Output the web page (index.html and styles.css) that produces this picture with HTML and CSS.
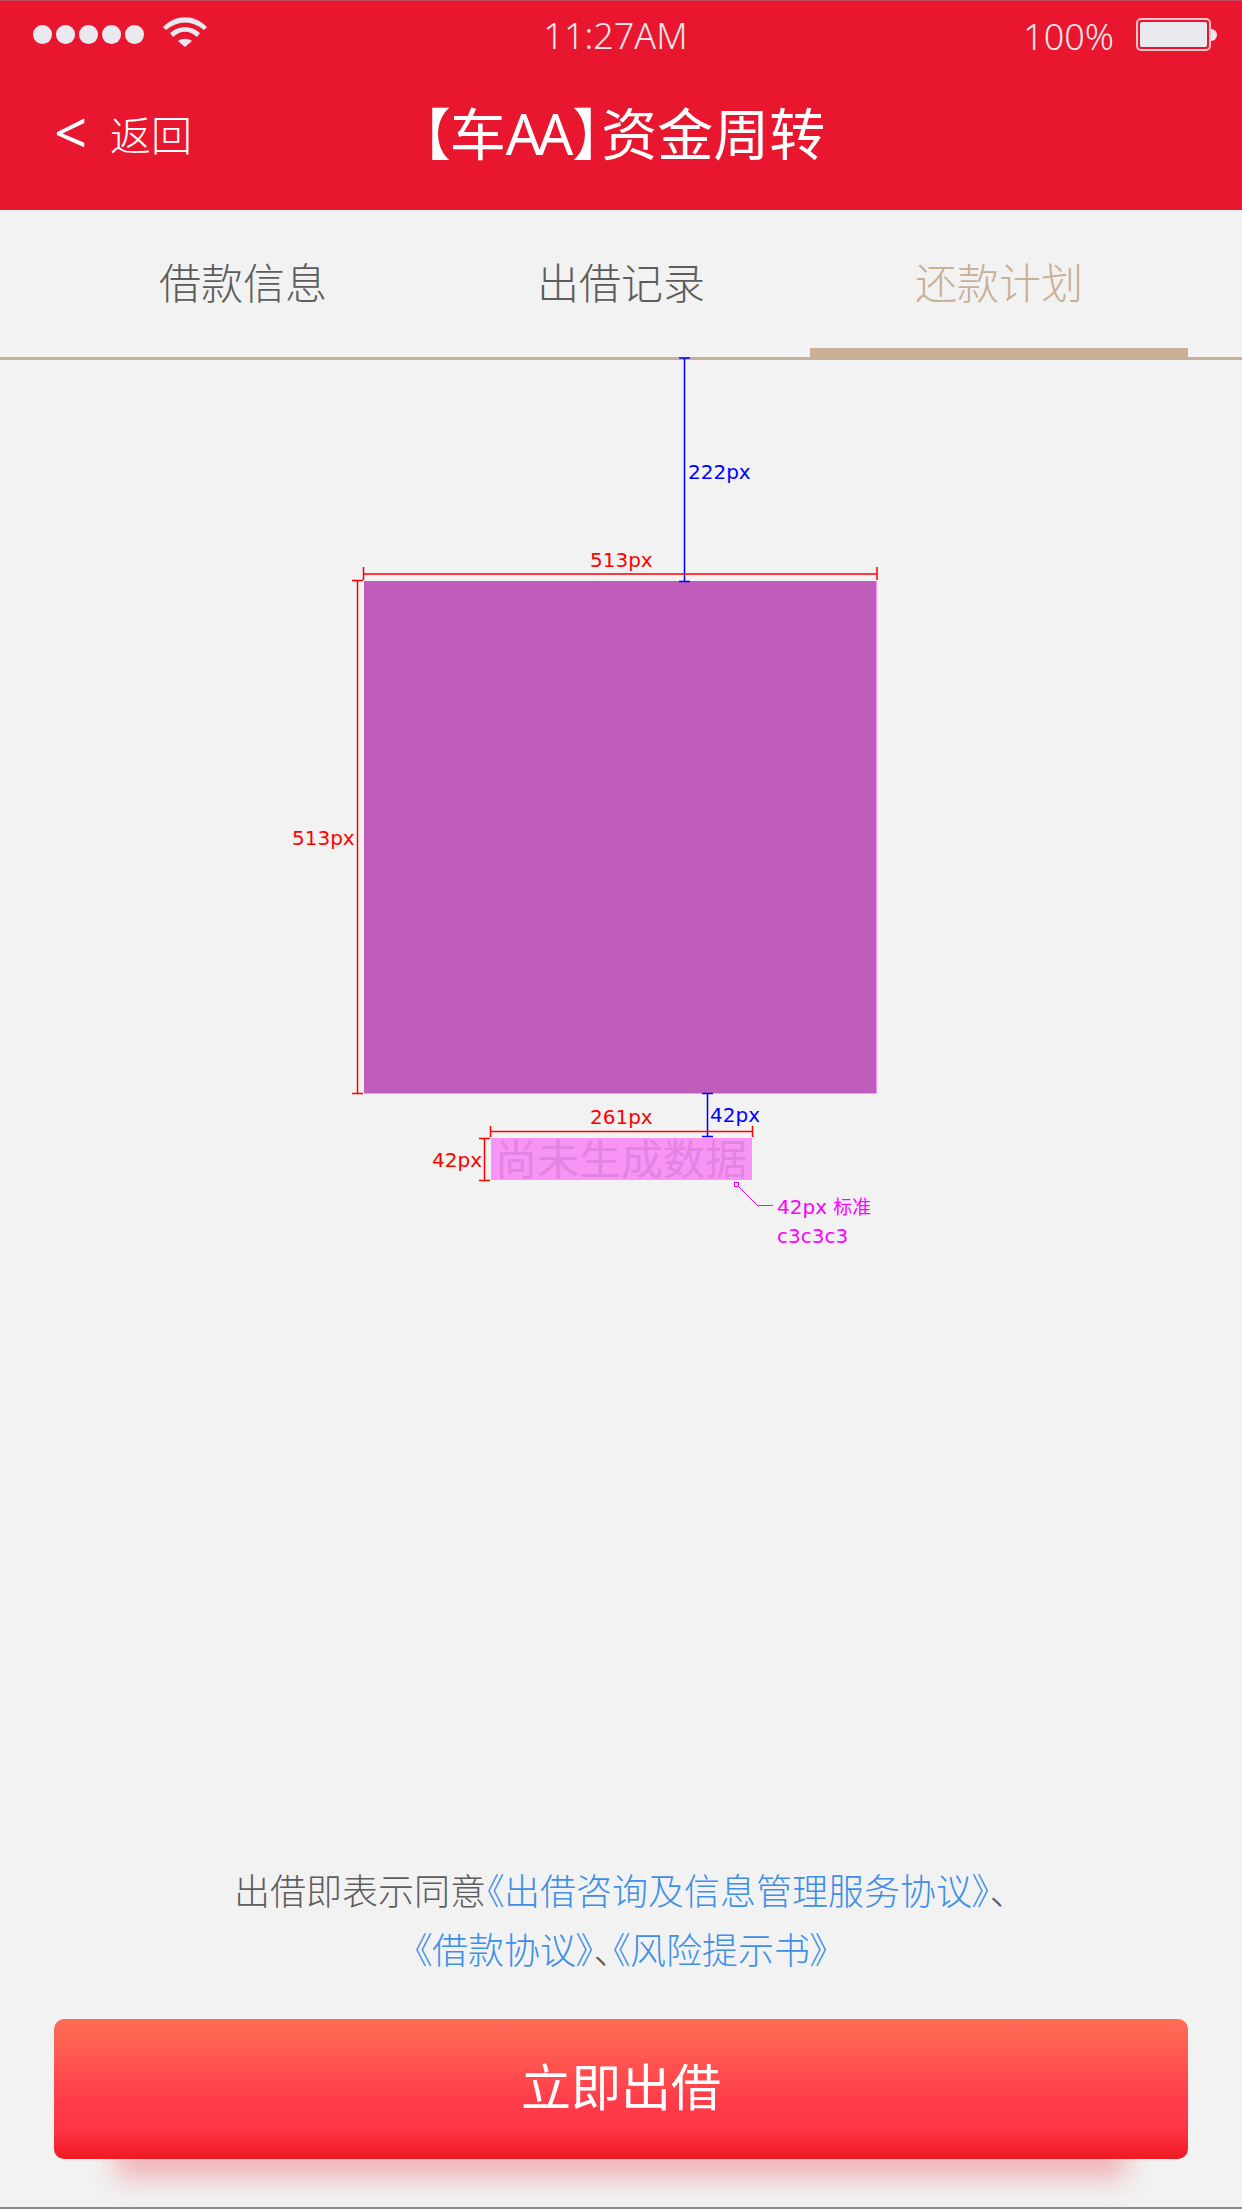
FILE: index.html
```html
<!DOCTYPE html>
<html lang="zh-CN">
  <head>
    <title>资金周转</title>
    <link rel="stylesheet" href="styles.css">
  </head>
  <body>
    <header class="header">
      <div class="status">
        <div class="status-left">
          <span class="dot"></span><span class="dot"></span><span class="dot"></span><span class="dot"></span><span class="dot"></span>
          <svg class="wifi" width="44" height="30" viewBox="0 0 44 30">
            <path d="M0 10 C13 -3 31 -3 44 10 L41 13 C29 3 15 3 3 13 Z" fill="#e9e9ef"/>
            <path d="M7 16 C16 8 28 8 37 16 L34 20 C26 13 18 13 10 20 Z" fill="#e9e9ef"/>
            <path d="M15 24 C19 21 25 21 29 24 L22 30 Z" fill="#e9e9ef"/>
          </svg>
        </div>
        <div class="time">11:27AM</div>
        <div class="status-right">
          <span class="percent">100%</span>
          <span class="battery"><span class="battery-fill"></span></span>
          <span class="battery-nub"></span>
        </div>
      </div>
      <div class="nav">
        <div class="back"><span class="back-arrow">&lt;</span><span>返回</span></div>
        <h1 class="title">【车<span class="latin">AA</span>】资金周转</h1>
      </div>
    </header>

    <div class="tabs">
      <div class="tab">借款信息</div>
      <div class="tab">出借记录</div>
      <div class="tab active">还款计划</div>
    </div>

    <main class="main">
      <div class="square"></div>
      <div class="empty-text">尚未生成数据</div>

      <!-- measurement marks laid over the design -->
      <svg class="marks" width="1242" height="900" viewBox="0 0 1242 900">
        <g stroke="#0000ff" stroke-width="1.5" fill="none">
          <path d="M684.5 -2V221M679 -2H690M679 221.5H690"/>
          <path d="M707.500 733V776M702 733.500H713M702 776.500H713"/>
        </g>
        <g stroke="#ff0000" stroke-width="1.5" fill="none">
          <path d="M363.500 214H877M363.500 207V220M877 207V220"/>
          <path d="M357.500 220V733M352 220.500H363M352 733.500H363"/>
          <path d="M490.500 771.500H752.500M490.500 766V777M752.500 766V777"/>
          <path d="M484.500 778V820M479 778.500H490M479 820.500H490"/>
        </g>
        <g stroke="#ff00ff" stroke-width="1" fill="none">
          <rect x="734.500" y="822.500" width="4" height="4"/>
          <path d="M738 826L757.500 845.500H773"/>
        </g>
      </svg>
      <span class="mark blue mark-222">222px</span>
      <span class="mark blue mark-42b">42px</span>
      <span class="mark red mark-513t">513px</span>
      <span class="mark red mark-513l">513px</span>
      <span class="mark red mark-261">261px</span>
      <span class="mark red mark-42r">42px</span>
      <span class="mark pink mark-note">42px <small>标准</small><br>c3c3c3</span>
    </main>

    <footer class="footer">
      <p class="agree">出借即表示同意<a>《出借咨询及信息管理服务协议》</a>、<br><a>《借款协议》</a>、<a>《风险提示书》</a></p>
      <button class="invest">立即出借</button>
    </footer>
  </body>
</html>
```

FILE: styles.css
```css
* {
  box-sizing: border-box;
}

html, body {
  margin: 0;
  height: 2209px;
}

body {
  width: 1242px;
  display: flex;
  flex-direction: column;
  background-color: #f2f2f2;
  font-family: "Noto Sans", "Noto Sans CJK SC", sans-serif;
  border-bottom: 2px solid #8a8a8a;
  overflow: hidden;
}

.header {
  height: 210px;
  background-color: #e91630;
  border-top: 1px solid #c4485c;
  color: #fff;
}

.status {
  height: 71px;
  display: flex;
  align-items: center;
  justify-content: space-between;
  position: relative;
  color: #f0e6ea;
}

.status-left {
  display: flex;
  align-items: center;
  gap: 4.500px;
  padding-left: 33px;
  margin-top: -4px;
}

.dot {
  width: 18.500px;
  height: 18.500px;
  border-radius: 50%;
  background-color: #e9e9ef;
}

.wifi {
  margin-left: 15px;
  margin-top: -6px;
}

.time {
  position: absolute;
  left: 0;
  right: 0;
  top: 14px;
  text-align: center;
  font-size: 36px;
  font-weight: 300;
  line-height: 42px;
  margin-left: -11px;
}

.status-right {
  display: flex;
  align-items: center;
  padding-right: 25px;
}

.percent {
  font-size: 36px;
  font-weight: 300;
  line-height: 42px;
  margin-right: 22px;
}

.battery {
  width: 75px;
  height: 33px;
  border: 2px solid #f3c4cc;
  border-radius: 5px;
  padding: 2px;
  margin-top: -4px;
}

.battery-fill {
  display: block;
  height: 100%;
  background-color: #e9e9ef;
  border-radius: 2px;
}

.battery-nub {
  width: 6px;
  height: 12px;
  background-color: #e9e9ef;
  border-radius: 0 6px 6px 0;
  margin-top: -4px;
}

.nav {
  height: 138px;
  display: flex;
  align-items: center;
  justify-content: center;
  position: relative;
}

.back {
  position: absolute;
  left: 54px;
  top: 35px;
  display: flex;
  align-items: center;
  font-size: 41px;
  font-weight: 300;
  line-height: 56px;
}

.back-arrow {
  font-size: 58px;
  font-weight: 400;
  width: 56px;
  line-height: 50px;
  margin-top: -6px;
}

.title {
  margin: -17px 0 0 5px;
  font-size: 56px;
  font-weight: 400;
  line-height: 66px;
  font-feature-settings: "palt";
}

.title .latin {
  letter-spacing: -4px;
  margin-right: 4px;
}

.tabs {
  height: 150px;
  display: flex;
  padding: 0 54px;
  border-bottom: 3px solid #c8af96;
}

.tab {
  flex: 1;
  text-align: center;
  font-size: 42px;
  font-weight: 300;
  line-height: 146px;
  color: #5c5c5c;
}

.tab.active {
  color: #c8af96;
  border-bottom: 9px solid #c8af96;
  height: 147px;
}

.main {
  flex: 1;
  position: relative;
  display: flex;
  flex-direction: column;
  align-items: center;
  padding-top: 221px;
}

.square {
  width: 513px;
  height: 513px;
  margin-left: -1px;
  background-color: #c05cbc;
  border-right: 1px solid #f794f5;
  border-bottom: 1px solid #f794f5;
}

.empty-text {
  width: 261px;
  height: 42px;
  margin-top: 44px;
  background-color: #f794f5;
  color: #e484e2;
  font-size: 42px;
  line-height: 38px;
  white-space: nowrap;
  font-family: "Noto Sans CJK SC", sans-serif;
  text-align: center;
}

.marks {
  position: absolute;
  left: 0;
  top: 0;
  overflow: visible;
}

.mark {
  position: absolute;
  font-family: "DejaVu Sans", sans-serif;
  font-size: 20px;
  line-height: 24px;
  white-space: nowrap;
}

.mark small {
  font-size: 19px;
  line-height: 1;
  font-family: "Noto Sans CJK SC", sans-serif;
}

.blue { color: #0000ff; }
.red { color: #ff0000; }
.pink { color: #ff00ff; line-height: 29px; }

.mark-222 { left: 688px; top: 100px; }
.mark-42b { left: 710px; top: 743px; }
.mark-513t { left: 590px; top: 188px; }
.mark-513l { left: 292px; top: 466px; }
.mark-261 { left: 590px; top: 745px; }
.mark-42r { left: 432px; top: 788px; }
.mark-note { left: 777px; top: 833px; }

.footer {
  height: 345px;
  padding: 0 54px;
  text-align: center;
}

.agree {
  margin: 0;
  font-size: 36px;
  font-weight: 300;
  line-height: 59px;
  color: #5e5e5e;
  font-feature-settings: "palt";
  white-space: nowrap;
}

.agree a {
  color: #3d8fe8;
}

.invest {
  display: block;
  position: relative;
  width: 100%;
  height: 140px;
  margin-top: 39px;
  padding: 0 0 10px;
  border: none;
  border-radius: 10px;
  background: linear-gradient(#ff6a55 5%, #ff3b4a 60%, #ff3545 78%, #ee1a24 100%);
  color: #fff;
  font-family: inherit;
  font-size: 50px;
}

.invest::after {
  content: "";
  position: absolute;
  left: 62px;
  right: 62px;
  bottom: -18px;
  height: 36px;
  z-index: -1;
  background-color: rgba(240, 50, 60, 0.36);
  filter: blur(14px);
}
```
